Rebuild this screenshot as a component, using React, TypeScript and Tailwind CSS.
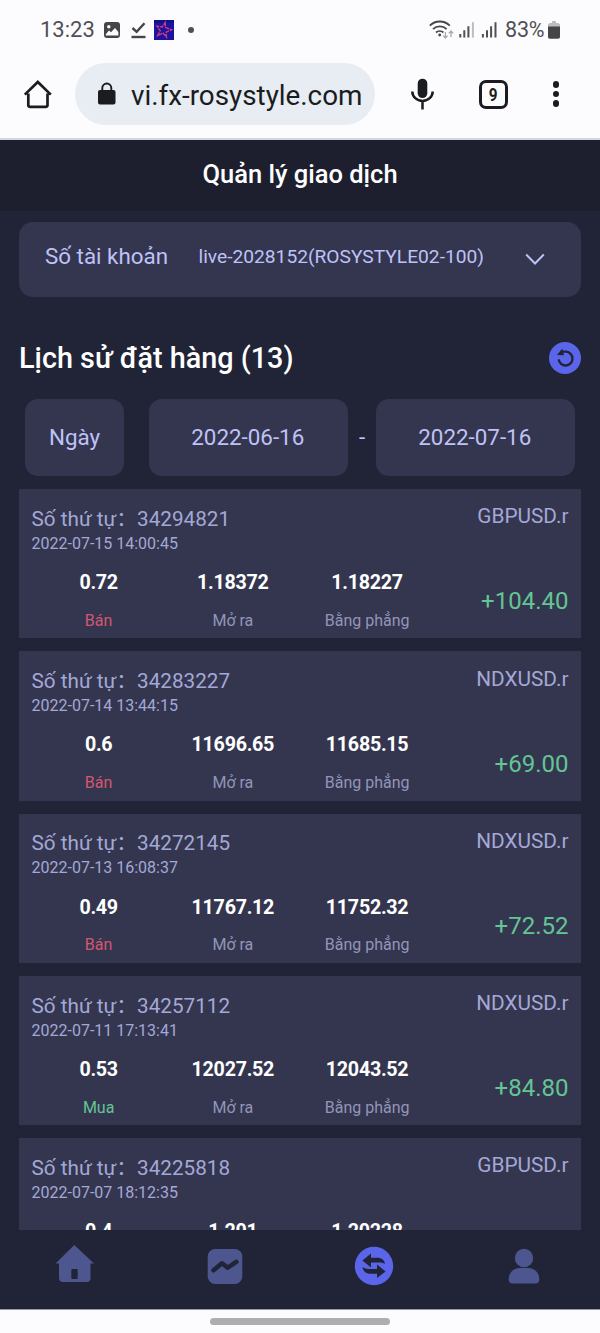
import type { ReactNode } from "react";

type Order = {
  id: string;
  time: string;
  symbol: string;
  lots: string;
  side: "Bán" | "Mua";
  open: string;
  close: string;
  profit: string;
};

const orders: Order[] = [
  { id: "34294821", time: "2022-07-15 14:00:45", symbol: "GBPUSD.r", lots: "0.72", side: "Bán", open: "1.18372", close: "1.18227", profit: "+104.40" },
  { id: "34283227", time: "2022-07-14 13:44:15", symbol: "NDXUSD.r", lots: "0.6", side: "Bán", open: "11696.65", close: "11685.15", profit: "+69.00" },
  { id: "34272145", time: "2022-07-13 16:08:37", symbol: "NDXUSD.r", lots: "0.49", side: "Bán", open: "11767.12", close: "11752.32", profit: "+72.52" },
  { id: "34257112", time: "2022-07-11 17:13:41", symbol: "NDXUSD.r", lots: "0.53", side: "Mua", open: "12027.52", close: "12043.52", profit: "+84.80" },
];

const partialOrder = { id: "34225818", time: "2022-07-07 18:12:35", symbol: "GBPUSD.r", prices: ["0.4", "1.201", "1.20228"] };

function StatusBar() {
  return (
    <div className="flex h-[60px] items-center pr-[40px] pl-[40px] text-[#505054]">
      <span className="-mt-px w-[55px] text-[22px] leading-[28px]">13:23</span>
      <svg className="ml-[9px]" width="16" height="16" viewBox="0 0 16 16">
        <rect width="16" height="16" rx="3" fill="#454549" />
        <circle cx="4.8" cy="4.7" r="1.7" fill="#fcfcff" />
        <path d="M1.8 12.2 5 8.4l2 1.8 4-4.2 3.4 4v3.4H1.8z" fill="#fcfcff" />
      </svg>
      <svg className="ml-[11px]" width="15" height="17" viewBox="0 0 15 17">
        <path d="M1.5 6 5.600 9.800 13.500 1.200" fill="none" stroke="#454549" strokeWidth="2.400" />
        <path d="M0.500 15h14" stroke="#454549" strokeWidth="2.400" />
      </svg>
      <svg className="ml-[8px]" width="20" height="20" viewBox="0 0 20 20">
        <rect width="20" height="20" fill="#1a14a0" />
        <path d="M0 0h20v3H0z" fill="#101090" />
        <path d="M11.200 2.500 11.500 7.500 17.600 9.800 12.200 12.200 12.500 17.200 9 13 3.600 15.600 6.200 10.600 3 6.200 8.300 7z" fill="none" stroke="#d63b7c" strokeWidth="1.400" strokeDasharray="4 .800" />
      </svg>
      <span className="ml-[14px] size-[6px] rounded-full bg-[#505054]" />
      <div className="ml-auto flex items-center">
        <svg width="134" height="20" viewBox="0 0 134 20" className="-mr-[134px]">
          <g fill="none" stroke="#454549" strokeWidth="1.800">
            <path d="M0.800 5.600a14.300 14.300 0 0 1 20 0" />
            <path d="M4 9.200a9.800 9.800 0 0 1 13.600 0" />
            <path d="M7 12.500a5.400 5.400 0 0 1 7.400 0" />
          </g>
          <circle cx="10.700" cy="15" r="1.400" fill="#454549" />
          <path d="M16.400 12v5.600m-2.200-2 2.200 2.400 2.200-2.400M22 17v-5.600m-2.200 2L22 11l2.200 2.400" fill="none" stroke="#a9a9ad" strokeWidth="1.300" />
          <g fill="#505054">
            <path d="M30.300 14h2v3.600h-2zM34.300 10.200h2v7.400h-2zM38.400 6.200h2v11.400h-2z" />
            <path d="M42.900 2.200h2v15.400h-2z" fill="#bcbcc0" />
            <path d="M52.900 14h2v3.600h-2zM57 10.200h2v7.400h-2zM61.100 6.200h2v11.400h-2zM65.500 2.200h2v15.400h-2z" />
          </g>
        </svg>
        <span className="-mt-px ml-[76px] w-[42px] text-[21.500px] leading-[28px] tracking-[-0.200px] whitespace-nowrap">83%</span>
        <svg width="12" height="18" viewBox="0 0 12 18" className="ml-[1px]">
          <path d="M4 0h4v2h2.500L12 3.500V7H0V3.500L1.500 2H4z" fill="#bcbcc0" />
          <path d="M0 5.600h12V16q0 1.800-1.800 1.800H1.800Q0 17.800 0 16z" fill="#454549" />
        </svg>
      </div>
    </div>
  );
}

function AddressBar() {
  return (
    <div className="flex h-[78px] pt-[3px] text-[#1a1c20]">
      <svg className="mt-[16px] ml-[23px]" width="30" height="31" viewBox="0 0 30 31">
        <path d="M5.300 14.500V26q0 1.800 1.800 1.800h15.600q1.800 0 1.800-1.800V14.500M1.800 15.600 14.800 3 27.800 15.600" fill="none" stroke="#1a1c20" strokeWidth="2.700" />
      </svg>
      <div className="ml-[22px] flex h-[62px] w-[300px] items-center rounded-full bg-[#e7edf3] pl-[23px]">
        <svg width="18" height="24" viewBox="0 0 18 24" className="-mt-px">
          <rect x="0" y="8" width="17.500" height="14.500" rx="2" fill="#1a1c20" />
          <path d="M4.300 9V6a4.500 4.500 0 0 1 9 0v3" fill="none" stroke="#1a1c20" strokeWidth="1.900" />
        </svg>
        <span className="mt-[3px] ml-[15px] text-[27.800px] leading-[36px] whitespace-nowrap">vi.fx-rosystyle.com</span>
      </div>
      <svg className="mt-[14px] ml-[36px]" width="23" height="34" viewBox="0 0 23 34">
        <rect x="6.700" y="1.700" width="9.600" height="19.400" rx="4.800" fill="#1a1c20" />
        <path d="M1.300 14.500a10.200 9.400 0 0 0 20.400 0M11.500 24v8.600" fill="none" stroke="#1a1c20" strokeWidth="2.500" />
      </svg>
      <div className="mt-[17px] ml-[45px] flex size-[29px] items-center justify-center rounded-[7px] border-[3px] border-[#1a1c20] text-[18px] leading-none font-bold">
        <span className="scale-x-85">9</span>
      </div>
      <div className="mt-[18px] ml-[44.500px] flex flex-col gap-[3px]">
        <span className="size-[6.500px] rounded-full bg-[#1a1c20]" />
        <span className="size-[6.500px] rounded-full bg-[#1a1c20]" />
        <span className="size-[6.500px] rounded-full bg-[#1a1c20]" />
      </div>
    </div>
  );
}

function Stat({ value, label, labelClass }: { value: string; label?: string; labelClass?: string }) {
  return (
    <div className="text-center">
      <div className="text-[19.700px] leading-[27px] font-bold tracking-[-0.280px] text-white">{value}</div>
      {label && <div className={"mt-[12.500px] text-[16px] leading-[24px] " + labelClass}>{label}</div>}
    </div>
  );
}

function OrderHeading({ id, time }: { id: string; time: string }) {
  return (
    <>
      <div className="h-[28px] text-[20.700px] leading-[28px] whitespace-nowrap text-[#a4a8d6]">Số thứ tự：{id}</div>
      <div className="h-[21px] text-[16px] leading-[21px] text-[#a4a8d6]">{time}</div>
    </>
  );
}

function OrderCard({ order }: { order: Order }) {
  return (
    <article className="flex h-[149.300px] shrink-0 bg-[#34364f] px-[12.500px]">
      <div className="w-3/4 pt-[15.700px]">
        <OrderHeading id={order.id} time={order.time} />
        <div className="mt-[15.500px] grid grid-cols-3">
          <Stat value={order.lots} label={order.side} labelClass={order.side === "Bán" ? "text-[#d2566f]" : "text-[#63c594]"} />
          <Stat value={order.open} label="Mở ra" labelClass="text-[#9295b8]" />
          <Stat value={order.close} label="Bằng phẳng" labelClass="text-[#9295b8]" />
        </div>
      </div>
      <div className="flex w-1/4 flex-col items-end pt-[13.300px] whitespace-nowrap">
        <span className="text-[20.800px] leading-[28px] text-[#a4a8d6]">{order.symbol}</span>
        <span className="mt-[55px] text-[24px] leading-[32px] text-[#63c594]">{order.profit}</span>
      </div>
    </article>
  );
}

function PartialOrderCard() {
  return (
    <article className="flex min-h-0 flex-1 overflow-hidden bg-[#34364f] px-[12.500px]">
      <div className="w-3/4 pt-[15.700px]">
        <OrderHeading id={partialOrder.id} time={partialOrder.time} />
        <div className="mt-[15.500px] grid grid-cols-3">
          {partialOrder.prices.map((price) => (
            <Stat key={price} value={price} />
          ))}
        </div>
      </div>
      <div className="flex w-1/4 flex-col items-end pt-[13.300px] whitespace-nowrap">
        <span className="text-[20.800px] leading-[28px] text-[#a4a8d6]">{partialOrder.symbol}</span>
      </div>
    </article>
  );
}

function DateBox({ children, className }: { children: ReactNode; className: string }) {
  return (
    <div className={"flex h-[77px] items-center justify-center rounded-[13px] bg-[#34364f] text-[22.400px] text-[#bfc2f8] " + className}>
      {children}
    </div>
  );
}

function TabBar() {
  return (
    <nav className="grid h-[79px] shrink-0 grid-cols-4 justify-items-center pt-[14px] pr-px">
      <svg width="40" height="42" viewBox="0 0 40 42">
        <path d="M19.300 1 39 19.500H35.500V34q0 4-4 4H8q-4 0-4-4V19.500H.500z" fill="#4d568f" />
        <rect x="16.300" y="25" width="6.400" height="10" rx="1" fill="#202436" />
      </svg>
      <svg width="36" height="42" viewBox="0 0 36 42">
        <rect x="0.700" y="5" width="34.600" height="35" rx="7.500" fill="#4d568f" />
        <path d="M6.500 26.300 15 19.200 20.700 23.700 29.300 17.800" fill="none" stroke="#202436" strokeWidth="4.500" strokeLinecap="round" strokeLinejoin="round" />
      </svg>
      <svg width="40" height="42" viewBox="0 0 40 42">
        <circle cx="20" cy="22" r="19.200" fill="#5b65e9" />
        <path d="M8.400 16.500 17 9.500V13.800h6.500c4 0 6.800 2.300 7.600 6-2-1-4.100-1.300-7-1.300H17v5zM31.600 27.500 23 34V29.700H16c-4.200 0-7-2.600-7.500-6.700 2 1.500 4.500 2 7.500 2h7v-4.600z" fill="#202436" />
      </svg>
      <svg width="36" height="42" viewBox="0 0 36 42">
        <circle cx="18" cy="14" r="9.200" fill="#4d568f" />
        <path d="M2.700 35.500C2.700 28 8 24 14 24h8c6 0 11.300 4 11.300 11.500q0 4-4 4H6.700q-4 0-4-4z" fill="#4d568f" />
      </svg>
    </nav>
  );
}

export default function App() {
  return (
    <div lang="vi" className="flex h-[1333px] w-[600px] flex-col overflow-hidden bg-[#fcfcff] font-['Roboto','Noto_Sans_CJK_SC',sans-serif]">
      <header className="h-[140px] shrink-0 border-b-2 border-[#d3d5df]">
        <StatusBar />
        <AddressBar />
      </header>

      <main className="flex min-h-0 flex-1 flex-col bg-[#202436]">
        <h1 className="flex h-[71px] shrink-0 items-center justify-center bg-[#1d1f2f] pb-[2px] text-[25.500px] font-medium text-white">
          Quản lý giao dịch
        </h1>

        <section className="mx-[19px] mt-[11px] flex h-[74.500px] shrink-0 items-center rounded-[14px] bg-[#34364f] pb-[4px] pl-[26px] text-[#bfc2f8]">
          <span className="w-[153.500px] text-[22.400px]">Số tài khoản</span>
          <span className="text-[19.200px]">live-2028152(ROSYSTYLE02-100)</span>
          <svg className="mt-[4px] ml-[41px]" width="20" height="13" viewBox="0 0 20 13">
            <path d="M1.200 1.500 10 10.500 18.800 1.500" fill="none" stroke="#bfc2f8" strokeWidth="2" />
          </svg>
        </section>

        <section className="mx-[19px] mt-[40px] flex h-[44px] shrink-0 items-center justify-between">
          <h2 className="text-[28.800px] font-medium text-white">Lịch sử đặt hàng (13)</h2>
          <svg className="-mt-[2px]" width="32" height="32" viewBox="0 0 32 32">
            <circle cx="16" cy="16" r="16" fill="#5b65e9" />
            <path d="M11.500 9.700H17a6.900 6.900 0 1 1-7.300 7.600" fill="none" stroke="#202436" strokeWidth="2.300" />
            <path d="M13.300 6.700 15 13.200 7.800 13z" fill="#202436" />
          </svg>
        </section>

        <section className="mx-[25px] mt-[18.500px] flex shrink-0 items-center">
          <DateBox className="w-[99px]">Ngày</DateBox>
          <div className="ml-auto flex items-center">
            <DateBox className="w-[199px] pr-[1.500px]">2022-06-16</DateBox>
            <span className="w-[28px] text-center text-[22.400px] text-[#bfc2f8]">-</span>
            <DateBox className="w-[199px] pr-[1.500px]">2022-07-16</DateBox>
          </div>
        </section>

        <section className="mx-[19px] mt-[13px] flex min-h-0 flex-1 flex-col gap-[13px] overflow-hidden">
          {orders.map((order) => (
            <OrderCard key={order.id} order={order} />
          ))}
          <PartialOrderCard />
        </section>

        <TabBar />
      </main>

      <footer className="flex h-[24px] shrink-0 justify-center border-t border-[#9a9ca5] pt-[8px]">
        <span className="h-[7px] w-[180px] rounded-full bg-[#aeaeb0]" />
      </footer>
    </div>
  );
}
